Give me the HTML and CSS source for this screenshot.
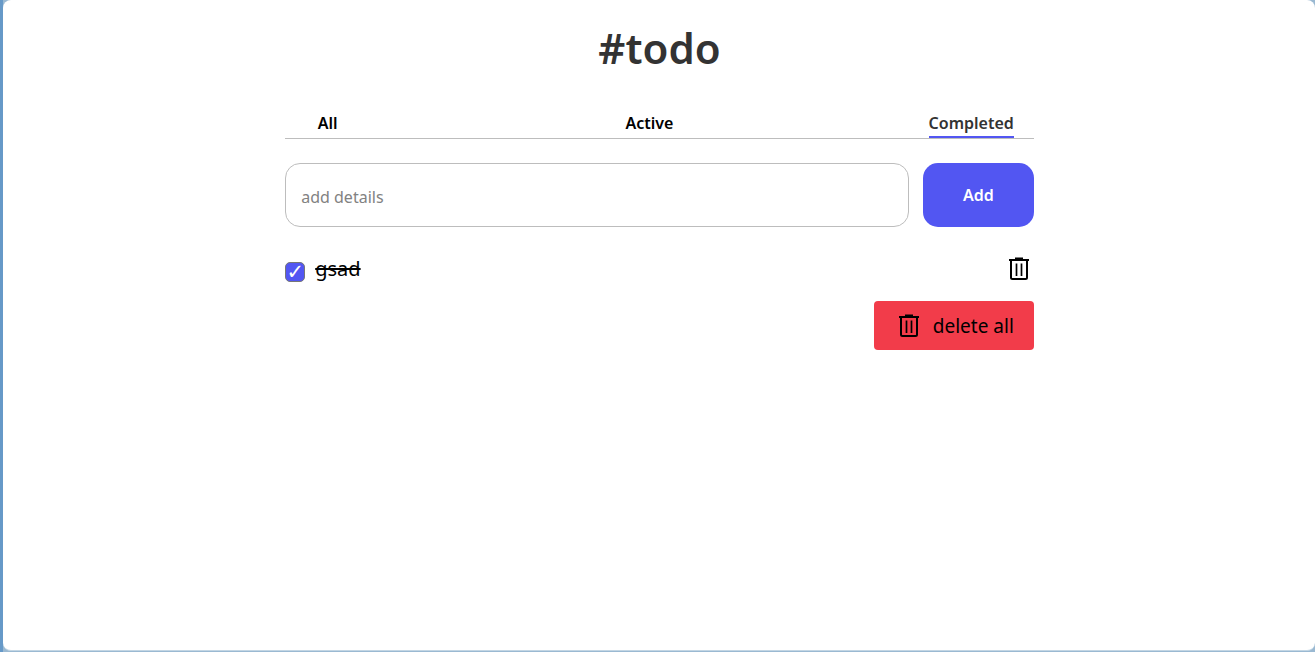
FILE: index.html
```
<!DOCTYPE html>
<html lang="en">
<head>
<meta charset="utf-8">
<meta name="viewport" content="width=device-width, initial-scale=1">
<title>#todo</title>
<link rel="stylesheet" href="styles.css">
</head>
<body>
<div class="window">
  <main class="todo">
    <h1 class="title">#todo</h1>
    <nav class="tabs">
      <a class="tab" href="#all">All</a>
      <a class="tab" href="#active">Active</a>
      <a class="tab tab-current" href="#completed" aria-current="page">Completed</a>
    </nav>
    <form class="add-form">
      <input class="add-input" type="text" placeholder="add details" aria-label="add details">
      <button class="add-button" type="button">Add</button>
    </form>
    <ul class="items">
      <li class="item">
        <label class="item-label"><input class="item-check" type="checkbox" checked><span class="item-text">gsad</span></label>
        <button class="item-delete" type="button" aria-label="Delete gsad">
          <svg class="icon" viewBox="0 0 20 23" fill="none" stroke="#000"><path d="M6 .5h8M0 2h20" stroke-width="2"/><path d="M2 2v17.500q0 1.500 1.500 1.500h13q1.500 0 1.500-1.500V2" stroke-width="2"/><path d="M7.500 5.500v12.500M12.500 5.500v12.500" stroke-width="1.700"/></svg>
        </button>
      </li>
    </ul>
    <button class="delete-all" type="button">
      <svg class="icon" viewBox="0 0 20 23" fill="none" stroke="#000"><path d="M6 .5h8M0 2h20" stroke-width="2"/><path d="M2 2v17.500q0 1.500 1.500 1.500h13q1.500 0 1.500-1.500V2" stroke-width="2"/><path d="M7.500 5.500v12.500M12.500 5.500v12.500" stroke-width="1.700"/></svg>
      delete all
    </button>
  </main>
</div>
</body>
</html>
```
FILE: styles.css
```
* { box-sizing: border-box; }
body {
  margin: 0;
  min-height: 100vh;
  display: flex;
  padding: 0 0 1px 3px;
  background: linear-gradient(to right, #6699c8 3px, #9ab9d2 3px);
  font-family: "Noto Sans", sans-serif;
  color: #000;
}
.window {
  flex: 1;
  padding-left: 1px;
  background: #fff;
  border-bottom: 1px solid #c3d6e4;
  border-radius: 8px;
}
.todo {
  width: 57.1%;
  min-width: 320px;
  margin: 0 auto;
  padding-top: 20px;
  display: flex;
  flex-direction: column;
}
.title {
  margin: 0;
  font-size: 42px;
  line-height: 56px;
  font-weight: 600;
  text-align: center;
  color: #333;
}
.tabs {
  margin-top: 34px;
  padding-right: 20px;
  display: flex;
  justify-content: space-between;
  border-bottom: 1px solid #bdbdbd;
}
.tab {
  min-width: 85px;
  font-size: 16px;
  line-height: 26px;
  font-weight: 600;
  text-align: center;
  color: #000;
  text-decoration: none;
  border-bottom: 2px solid transparent;
}
.tab-current {
  color: #333;
  border-color: #5256f2;
}
.add-form {
  margin-top: 24px;
  display: flex;
  gap: 14px;
}
.add-input {
  flex: 1;
  min-width: 0;
  height: 64px;
  padding: 4px 15px 0;
  border: 1px solid #bdbdbd;
  border-radius: 15px;
  font: 16px "Noto Sans", sans-serif;
}
.add-input::placeholder { color: #828282; }
.add-button {
  width: 111px;
  border: 0;
  border-radius: 15px;
  background: #5256f2;
  color: #fff;
  font: 600 16px "Noto Sans", sans-serif;
}
.items {
  list-style: none;
  margin: 25px 0 0;
  padding: 0;
}
.item {
  display: flex;
  justify-content: space-between;
  align-items: center;
  padding-right: 5px;
}
.item-label {
  display: flex;
  align-items: center;
  gap: 10px;
}
.item-check {
  appearance: none;
  display: grid;
  place-items: center;
  width: 20px;
  height: 20px;
  margin: 5px 0 0;
  border: 1px solid #777;
  border-radius: 5px;
  background: #5256f2;
}
.item-check:checked::before {
  content: "✓";
  color: #fff;
  font: bold 21px/18px "DejaVu Sans", sans-serif;
}
.item-text {
  font-size: 20px;
  line-height: 34px;
  text-decoration: line-through;
}
.item-delete {
  display: flex;
  padding: 0;
  border: 0;
  background: none;
}
.icon {
  width: 20px;
  height: 23px;
  overflow: visible;
}
.delete-all {
  align-self: flex-end;
  display: flex;
  align-items: center;
  gap: 14px;
  height: 49px;
  margin-top: 15px;
  padding: 0 20px 0 25px;
  border: 0;
  border-radius: 4px;
  background: #f23c4a;
  color: #000;
  font: 19px "Noto Sans", sans-serif;
}
.delete-all .icon { margin-top: 2px; }
```
